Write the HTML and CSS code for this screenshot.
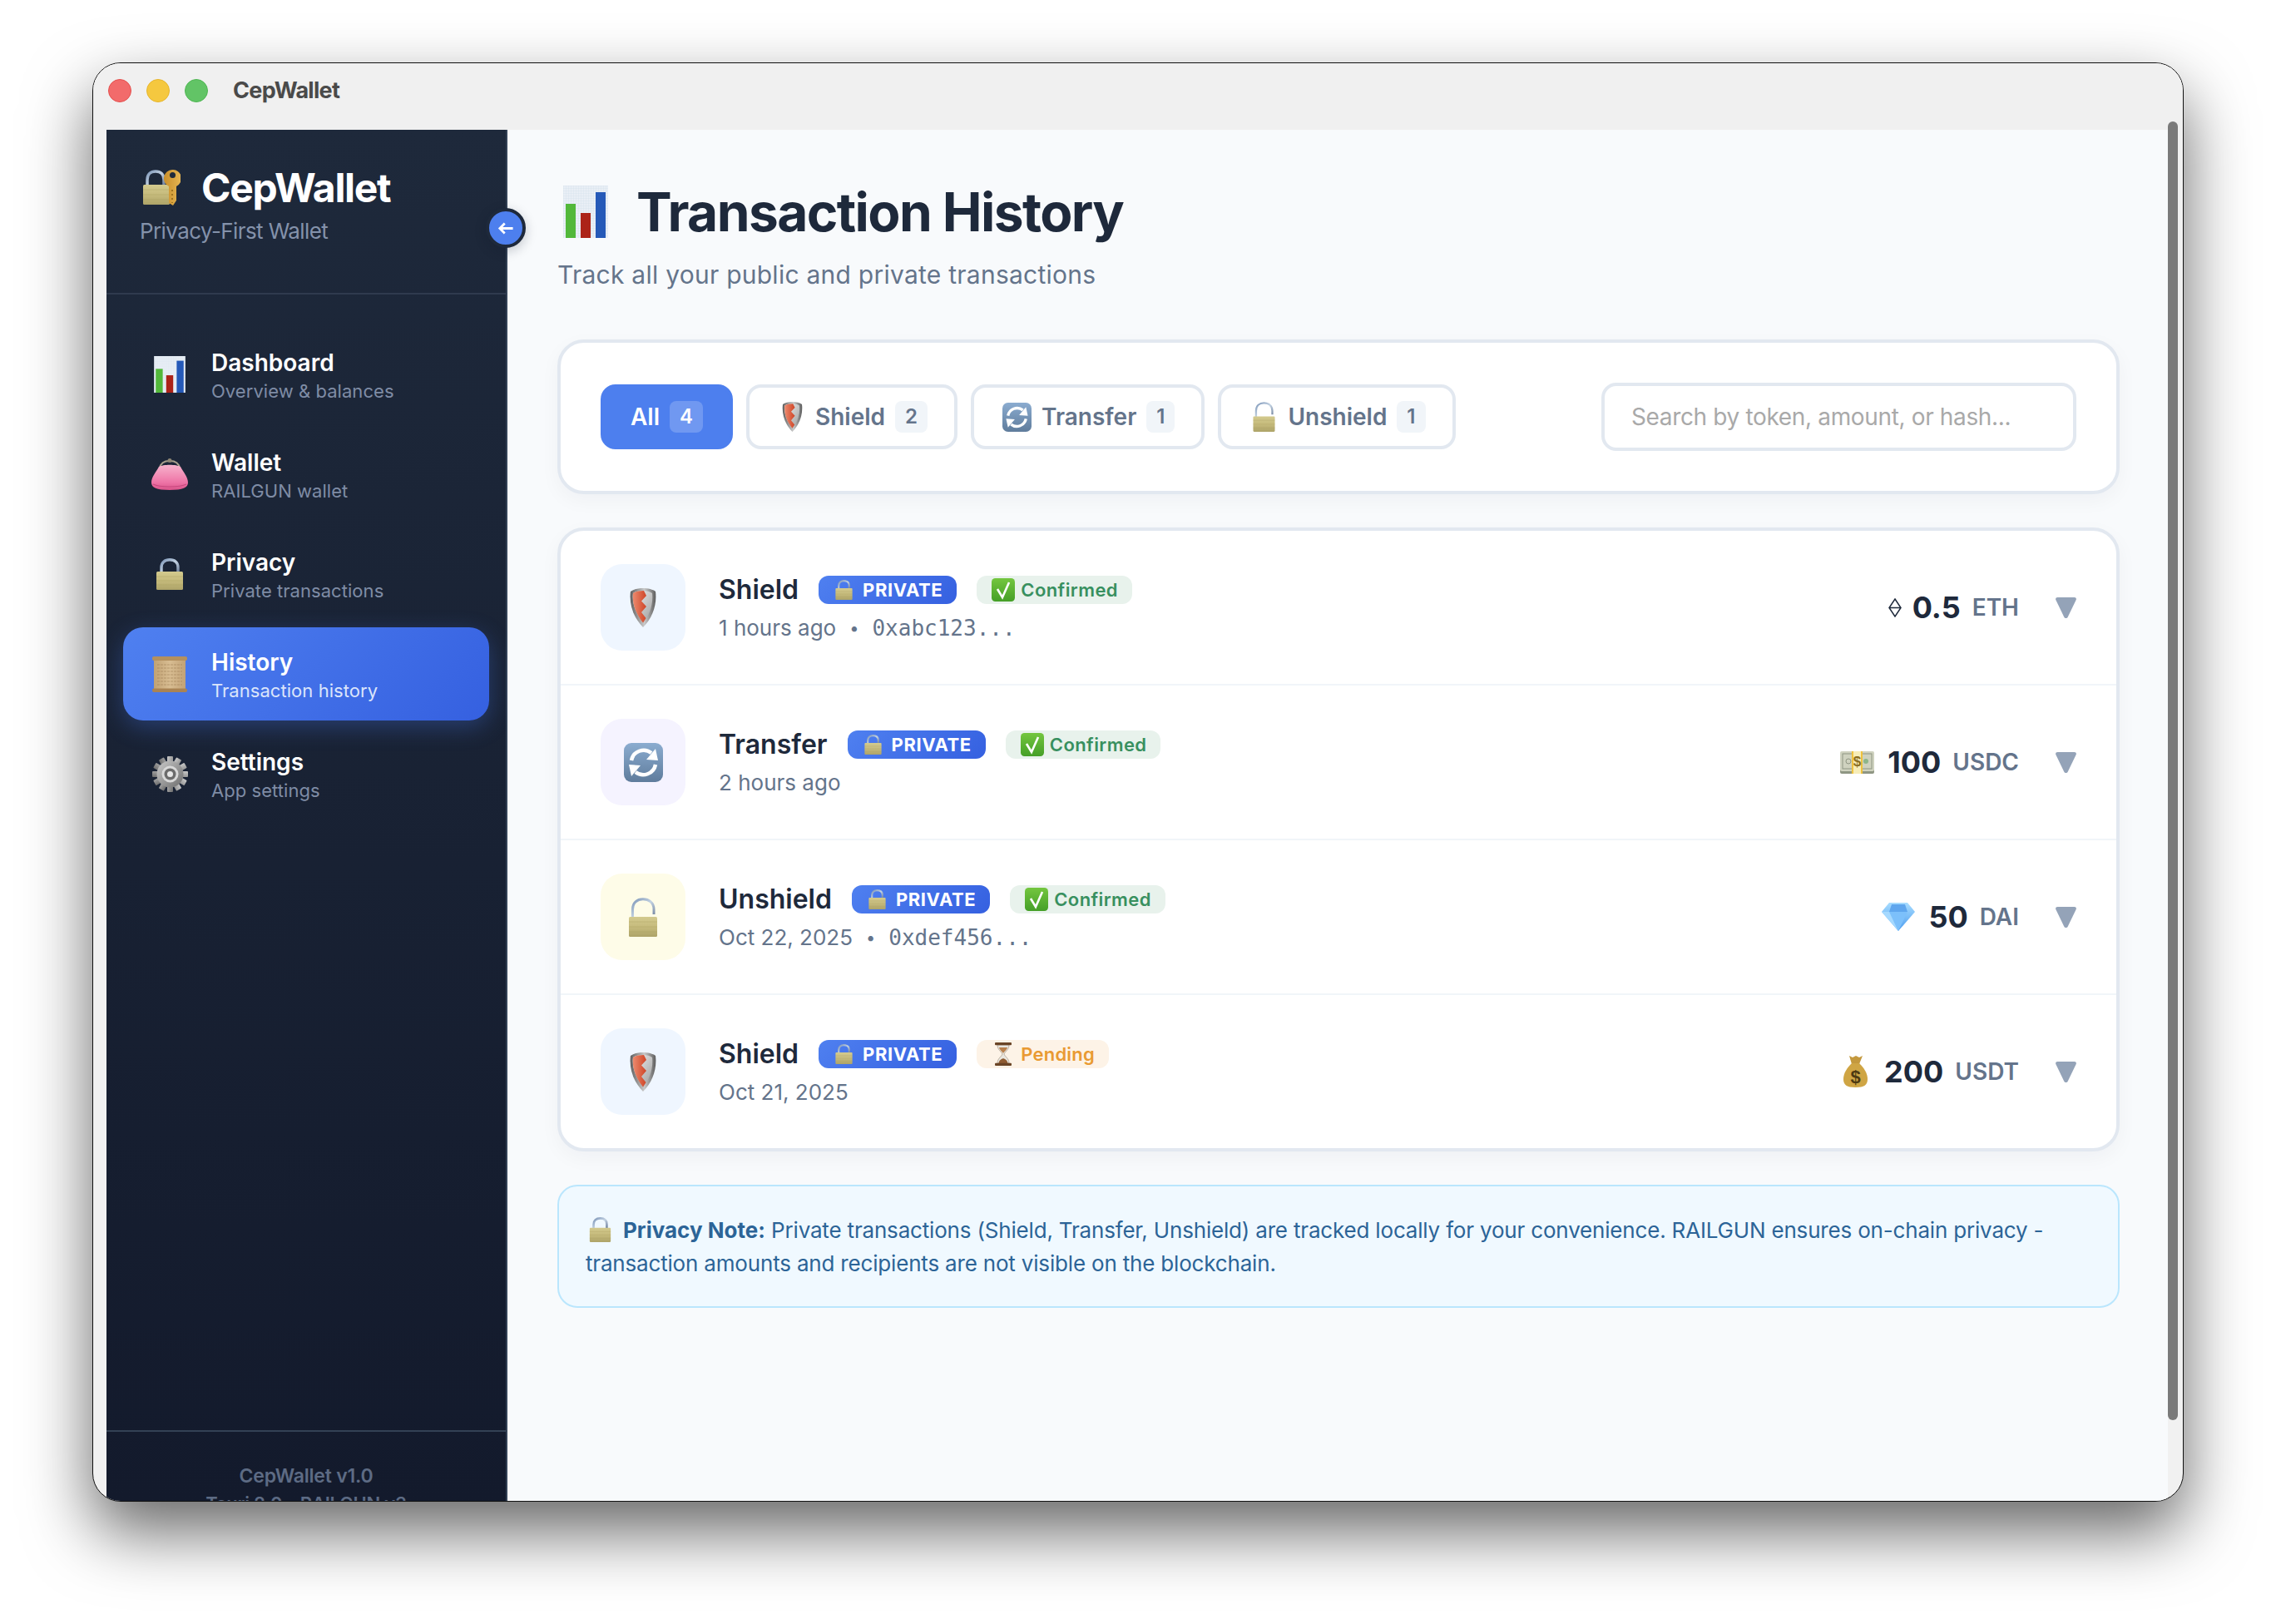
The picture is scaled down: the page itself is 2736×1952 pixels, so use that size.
FILE: index.html
```html
<!DOCTYPE html>
<html lang="en">
<head>
<meta charset="utf-8">
<title>CepWallet</title>
<link rel="stylesheet" href="styles.css">
</head>
<body>
<svg class="sprite" xmlns="http://www.w3.org/2000/svg" aria-hidden="true">
  <defs>
    <linearGradient id="gBrass" x1="0" y1="0" x2="0" y2="1"><stop offset="0" stop-color="#d3ca8e"/><stop offset=".5" stop-color="#c6bb7c"/><stop offset="1" stop-color="#ada368"/></linearGradient>
    <linearGradient id="gSilver" x1="0" y1="0" x2="1" y2="1"><stop offset="0" stop-color="#7d96b8"/><stop offset=".5" stop-color="#c3d2e2"/><stop offset="1" stop-color="#6e809c"/></linearGradient>
    <linearGradient id="gSwap" x1="0" y1="0" x2="0" y2="1"><stop offset="0" stop-color="#8bacd0"/><stop offset="1" stop-color="#5f7c9c"/></linearGradient>
    <linearGradient id="gCheck" x1="0" y1="0" x2="0" y2="1"><stop offset="0" stop-color="#74c63f"/><stop offset="1" stop-color="#459f27"/></linearGradient>
    <linearGradient id="gPink" x1="0" y1="0" x2="0" y2="1"><stop offset="0" stop-color="#f7b2cc"/><stop offset=".7" stop-color="#ee74a6"/><stop offset="1" stop-color="#d9538a"/></linearGradient>
    <linearGradient id="gPaper" x1="0" y1="0" x2="1" y2="0"><stop offset="0" stop-color="#c0a173"/><stop offset=".5" stop-color="#d8bd92"/><stop offset="1" stop-color="#c2a276"/></linearGradient>
    <linearGradient id="gGear" x1="0" y1="0" x2="1" y2="1"><stop offset="0" stop-color="#c9c9c9"/><stop offset="1" stop-color="#6d6d6d"/></linearGradient>
    <linearGradient id="gShield" x1="0" y1="0" x2="1" y2="0"><stop offset="0" stop-color="#5f5f5f"/><stop offset=".55" stop-color="#c9c9c9"/><stop offset="1" stop-color="#5d5d5d"/></linearGradient>
    <linearGradient id="gShieldR" x1="0" y1="0" x2="1" y2="1"><stop offset="0" stop-color="#f2f2f2"/><stop offset="1" stop-color="#9d9d9d"/></linearGradient>
    <linearGradient id="gRed" x1="0" y1="0" x2="1" y2="0"><stop offset="0" stop-color="#ec8a6e"/><stop offset="1" stop-color="#cf4527"/></linearGradient>
    <linearGradient id="gKey" x1="0" y1="0" x2="1" y2="0"><stop offset="0" stop-color="#c98f2a"/><stop offset="1" stop-color="#e6b654"/></linearGradient>
    <linearGradient id="gGem" x1="0" y1="0" x2="0" y2="1"><stop offset="0" stop-color="#a7dcff"/><stop offset="1" stop-color="#4c9df0"/></linearGradient>
    <pattern id="pGrid" width="3" height="3" patternUnits="userSpaceOnUse"><rect width="3" height="3" fill="#e9eff6"/><path d="M3 0H0V3" fill="none" stroke="#cfdbe8" stroke-width=".6"/></pattern>
  </defs>
  <symbol id="chart" viewBox="0 0 54 63">
    <rect width="54" height="63" fill="url(#pGrid)"/>
    <rect x="3" y="22" width="12" height="41" fill="#52b83a"/>
    <rect x="21" y="33" width="12" height="30" fill="#ac2318"/>
    <rect x="39" y="8" width="12" height="55" fill="#2559b8"/>
  </symbol>
  <symbol id="lockkey" viewBox="0 0 45 43">
    <path d="M5 19V12C5 5.500 9 2 15 2S25 5.500 25 12V19" fill="none" stroke="url(#gSilver)" stroke-width="3.500"/>
    <rect y="18" width="32" height="24" rx="1.500" fill="url(#gBrass)"/>
    <path d="M0 24H32M0 30H32M0 36H32" stroke="#a99e60" stroke-width=".6" opacity=".6"/>
    <path d="M35 0A10.500 10.500 0 0 1 40 20V37L36 43L31 40V20A10.500 10.500 0 0 1 35 0Z" fill="url(#gKey)"/>
    <circle cx="35.500" cy="6.500" r="3.500" fill="#1e293b"/>
    <path d="M35 24V40" stroke="#8e6414" stroke-width="1.500" stroke-dasharray="2 3"/>
  </symbol>
  <symbol id="lock" viewBox="0 0 32 38">
    <path d="M6 18V11C6 5 10 1.800 16 1.800S26 5 26 11V18" fill="none" stroke="url(#gSilver)" stroke-width="3.400"/>
    <rect y="16" width="32" height="22" rx="1.500" fill="url(#gBrass)"/>
    <path d="M0 22H32M0 27H32M0 32H32" stroke="#a99e60" stroke-width=".6" opacity=".6"/>
  </symbol>
  <symbol id="unlock" viewBox="0 0 34 47">
    <path d="M4.500 24V14C4.500 6 10 1.800 17 1.800S30 6 30 14V20" fill="none" stroke="url(#gSilver)" stroke-width="3"/>
    <rect y="23" width="34" height="24" rx="1.500" fill="url(#gBrass)"/>
    <path d="M0 29H34M0 35H34M0 41H34" stroke="#a99e60" stroke-width=".6" opacity=".6"/>
  </symbol>
  <symbol id="shield" viewBox="0 0 32 47">
    <path d="M16 0C22 0 28 1.500 31 4C33 20 27 36 16 47C5 36-1 20 1 4C4 1.500 10 0 16 0Z" fill="url(#gShield)"/>
    <path d="M16 3C20 3 24.500 4 27 6C28.500 19 24 32 16 41.500C8 32 2.500 19 4 6C6.500 4 12 3 16 3Z" fill="url(#gShieldR)"/>
    <path d="M17 3C12 3 6.500 4 4 6C2.500 19 8 32 16 41.500L19.500 36L14 29L20 22L14 15.500L20 9Z" fill="url(#gRed)"/>
  </symbol>
  <symbol id="swap" viewBox="0 0 47 47">
    <rect width="47" height="47" rx="9" fill="url(#gSwap)"/>
    <path d="M9 21A15 15 0 0 1 33 12" fill="none" stroke="#fff" stroke-width="4.500"/>
    <path d="M27 20L41 21L38 7Z" fill="#fff"/>
    <path d="M38 26A15 15 0 0 1 14 35" fill="none" stroke="#fff" stroke-width="4.500"/>
    <path d="M20 27L6 26L9 40Z" fill="#fff"/>
  </symbol>
  <symbol id="check" viewBox="0 0 28 28">
    <rect width="28" height="28" rx="4.500" fill="url(#gCheck)"/>
    <path d="M7 13L13 23L21 5" fill="none" stroke="#fff" stroke-width="2.600"/>
  </symbol>
  <symbol id="hourglass" viewBox="0 0 20 28">
    <path d="M3 3H17C17 9 12 11 11 14C12 17 17 19 17 25H3C3 19 8 17 9 14C8 11 3 9 3 3Z" fill="#e9e6df" stroke="#9a8a76" stroke-width=".6"/>
    <path d="M5 6H15C14.500 9 11 11 10 13C9 11 5.500 9 5 6Z" fill="#b9814d"/>
    <path d="M4.500 25C5 21 8 20 10 19C12 20 15 21 15.500 25Z" fill="#8f5b31"/>
    <rect width="20" height="3.200" rx="1" fill="#6b4526"/>
    <rect y="24.800" width="20" height="3.200" rx="1" fill="#6b4526"/>
  </symbol>
  <symbol id="gem" viewBox="0 0 40 34">
    <path d="M9 0H31L40 11L20 34L0 11Z" fill="url(#gGem)"/>
    <path d="M12 2H28L31 11H9Z" fill="#5fa6ee"/>
    <path d="M9 11H31L20 34Z" fill="#7cc0fb"/>
    <path d="M0 11L9 11L20 34Z" fill="#a5d9ff"/>
  </symbol>
  <symbol id="purse" viewBox="0 0 44 38">
    <path d="M10 12C11 5 16 3 22 3S33 5 34 12" fill="none" stroke="#a79f8c" stroke-width="2"/>
    <circle cx="22" cy="2.500" r="2.500" fill="#8f8775"/>
    <path d="M9 10C14 7 30 7 35 10C38 16 44 22 44 29C44 35 38 38 22 38S0 35 0 29C0 22 6 16 9 10Z" fill="url(#gPink)"/>
    <path d="M2 31C10 35 34 35 42 31" fill="none" stroke="#c9487f" stroke-width="1.200"/>
  </symbol>
  <symbol id="gear" viewBox="0 0 43 43">
    <g fill="url(#gGear)">
      <rect x="18" width="7" height="43" rx="1"/>
      <rect x="18" width="7" height="43" rx="1" transform="rotate(30 21.500 21.500)"/>
      <rect x="18" width="7" height="43" rx="1" transform="rotate(60 21.500 21.500)"/>
      <rect x="18" width="7" height="43" rx="1" transform="rotate(90 21.500 21.500)"/>
      <rect x="18" width="7" height="43" rx="1" transform="rotate(120 21.500 21.500)"/>
      <rect x="18" width="7" height="43" rx="1" transform="rotate(150 21.500 21.500)"/>
    </g>
    <circle cx="21.500" cy="21.500" r="16" fill="url(#gGear)"/>
    <circle cx="21.500" cy="21.500" r="10" fill="#d9d9d9"/>
    <circle cx="21.500" cy="21.500" r="7" fill="#6c6c6c"/>
    <circle cx="21.500" cy="21.500" r="3.500" fill="#e7e7e7"/>
  </symbol>
  <symbol id="scroll" viewBox="0 0 42 43">
    <rect x="2" y="3" width="38" height="37" fill="url(#gPaper)"/>
    <path d="M6 10H36M6 14H36M6 18H36M6 22H36M6 26H36M6 30H36M6 34H36" stroke="#8c6a42" stroke-width=".7" stroke-dasharray="3 1" opacity=".6"/>
    <rect width="42" height="5" rx="2" fill="#b3905f"/>
    <rect y="38.500" width="42" height="4.500" rx="2" fill="#a98354"/>
  </symbol>
  <symbol id="eth" viewBox="0 0 16 23">
    <path d="M8 1L15 11.500L8 22L1 11.500ZM1 11.500H15" fill="none" stroke="#1e293b" stroke-width="1.500"/>
  </symbol>
  <symbol id="tri" viewBox="0 0 25 25">
    <path d="M2.500 0H22.500C24.500 0 25.300 1.500 24.700 3L14.800 23.500C13.800 25.500 11.200 25.500 10.200 23.500L.3 3C-.3 1.500.5 0 2.500 0Z" fill="#94a3b8"/>
  </symbol>
</svg>

<div class="window">
  <header class="titlebar">
    <span class="light light-red"></span>
    <span class="light light-yellow"></span>
    <span class="light light-green"></span>
    <span class="window-title">CepWallet</span>
  </header>
  <div class="window-body">
    <aside class="sidebar">
      <div class="brand">
        <div class="brand-row">
          <svg class="i-lockkey"><use href="#lockkey"/></svg>
          <span class="brand-name">CepWallet</span>
        </div>
        <div class="brand-sub">Privacy-First Wallet</div>
      </div>
      <nav class="nav">
        <a class="nav-item"><span class="nav-icon"><svg class="i-nav-chart"><use href="#chart"/></svg></span><span class="nav-text"><b>Dashboard</b><small>Overview &amp; balances</small></span></a>
        <a class="nav-item"><span class="nav-icon"><svg class="i-nav-purse"><use href="#purse"/></svg></span><span class="nav-text"><b>Wallet</b><small>RAILGUN wallet</small></span></a>
        <a class="nav-item"><span class="nav-icon"><svg class="i-nav-lock"><use href="#lock"/></svg></span><span class="nav-text"><b>Privacy</b><small>Private transactions</small></span></a>
        <a class="nav-item active"><span class="nav-icon"><svg class="i-nav-scroll"><use href="#scroll"/></svg></span><span class="nav-text"><b>History</b><small>Transaction history</small></span></a>
        <a class="nav-item"><span class="nav-icon"><svg class="i-nav-gear"><use href="#gear"/></svg></span><span class="nav-text"><b>Settings</b><small>App settings</small></span></a>
      </nav>
      <footer class="side-foot">
        <div class="foot-name">CepWallet v1.0</div>
        <div class="foot-stack">Tauri 2.0 • RAILGUN v3</div>
      </footer>
    </aside>
    <button class="collapse" aria-label="Collapse sidebar">
      <svg viewBox="0 0 18 14" class="i-back"><path d="M17 7H2.500M7.800 1.500L2.300 7L7.800 12.500" fill="none" stroke="#fff" stroke-width="2.600"/></svg>
    </button>

    <main class="main">
      <h1 class="page-title"><svg class="i-title"><use href="#chart"/></svg>Transaction History</h1>
      <p class="page-sub">Track all your public and private transactions</p>

      <section class="card filters">
        <div class="tabs">
          <button class="tab tab-on">All <span class="count">4</span></button>
          <button class="tab"><svg class="i-tab-shield"><use href="#shield"/></svg>Shield <span class="count">2</span></button>
          <button class="tab"><svg class="i-tab-swap"><use href="#swap"/></svg>Transfer <span class="count">1</span></button>
          <button class="tab"><svg class="i-tab-unlock"><use href="#unlock"/></svg>Unshield <span class="count">1</span></button>
        </div>
        <input class="search" type="text" placeholder="Search by token, amount, or hash...">
      </section>

      <section class="card list">
        <article class="tx">
          <span class="tx-icon tint-blue"><svg class="i-row-shield"><use href="#shield"/></svg></span>
          <div class="tx-info">
            <div class="tx-head"><span class="tx-name">Shield</span><span class="pill pill-private"><svg class="i-pill-lock"><use href="#lock"/></svg>PRIVATE</span><span class="pill pill-ok"><svg class="i-pill-check"><use href="#check"/></svg>Confirmed</span></div>
            <div class="tx-meta"><span>1 hours ago</span><span class="dot">•</span><span class="hash">0xabc123...</span></div>
          </div>
          <div class="amount"><svg class="i-eth"><use href="#eth"/></svg><span class="num">0.5</span><span class="unit">ETH</span></div>
          <svg class="i-tri"><use href="#tri"/></svg>
        </article>
        <article class="tx">
          <span class="tx-icon tint-purple"><svg class="i-row-swap"><use href="#swap"/></svg></span>
          <div class="tx-info">
            <div class="tx-head"><span class="tx-name">Transfer</span><span class="pill pill-private"><svg class="i-pill-lock"><use href="#lock"/></svg>PRIVATE</span><span class="pill pill-ok"><svg class="i-pill-check"><use href="#check"/></svg>Confirmed</span></div>
            <div class="tx-meta"><span>2 hours ago</span></div>
          </div>
          <div class="amount">
            <svg class="i-money" viewBox="0 0 41 27">
              <rect y="2" width="41" height="25" rx="2" fill="#8f9683"/>
              <rect width="41" height="24" rx="2" fill="#cfd2bf"/>
              <rect x="3" y="3" width="35" height="18" fill="none" stroke="#8f9683"/>
              <circle cx="10" cy="12" r="3" fill="none" stroke="#8f9683"/>
              <circle cx="31" cy="12" r="3" fill="#8db58a"/>
              <rect x="14" width="13" height="27" fill="#f7edb7"/>
              <rect x="14" width="2" height="27" fill="#efc23f"/>
              <rect x="25" width="2" height="27" fill="#efc23f"/>
              <text x="20.500" y="18" text-anchor="middle" class="svg-dollar">$</text>
            </svg>
            <span class="num">100</span><span class="unit">USDC</span></div>
          <svg class="i-tri"><use href="#tri"/></svg>
        </article>
        <article class="tx">
          <span class="tx-icon tint-yellow"><svg class="i-row-unlock"><use href="#unlock"/></svg></span>
          <div class="tx-info">
            <div class="tx-head"><span class="tx-name">Unshield</span><span class="pill pill-private"><svg class="i-pill-lock"><use href="#lock"/></svg>PRIVATE</span><span class="pill pill-ok"><svg class="i-pill-check"><use href="#check"/></svg>Confirmed</span></div>
            <div class="tx-meta"><span>Oct 22, 2025</span><span class="dot">•</span><span class="hash">0xdef456...</span></div>
          </div>
          <div class="amount"><svg class="i-gem"><use href="#gem"/></svg><span class="num">50</span><span class="unit">DAI</span></div>
          <svg class="i-tri"><use href="#tri"/></svg>
        </article>
        <article class="tx">
          <span class="tx-icon tint-blue"><svg class="i-row-shield"><use href="#shield"/></svg></span>
          <div class="tx-info">
            <div class="tx-head"><span class="tx-name">Shield</span><span class="pill pill-private"><svg class="i-pill-lock"><use href="#lock"/></svg>PRIVATE</span><span class="pill pill-wait"><svg class="i-pill-glass"><use href="#hourglass"/></svg>Pending</span></div>
            <div class="tx-meta"><span>Oct 21, 2025</span></div>
          </div>
          <div class="amount">
            <svg class="i-bag" viewBox="0 0 29 38">
              <path d="M7 0L11 2L15 0L19 2L23 0L19 10H10Z" fill="#c4993e"/>
              <path d="M10 9H19C25 15 29 21 29 28C29 35 25 38 14.500 38S0 35 0 28C0 21 4 15 10 9Z" fill="#cfa544"/>
              <text x="14.500" y="33" text-anchor="middle" class="svg-bag">$</text>
            </svg>
            <span class="num">200</span><span class="unit">USDT</span></div>
          <svg class="i-tri"><use href="#tri"/></svg>
        </article>
      </section>

      <section class="note">
        <svg class="i-note-lock"><use href="#lock"/></svg><strong>Privacy Note:</strong> Private transactions (Shield, Transfer, Unshield) are tracked locally for your convenience. RAILGUN ensures on-chain privacy - transaction amounts and recipients are not visible on the blockchain.
      </section>
    </main>
    <span class="scrollbar"></span>
  </div>
</div>
</body>
</html>
```
FILE: styles.css
```css
* { box-sizing: border-box; }
html, body { margin: 0; height: 100%; }
body {
  background: #fff;
  font-family: Inter, "Noto Sans", sans-serif;
  padding: 75px 111px 147px 111px;
  overflow: hidden;
}
.sprite { display: block; width: 0; height: 0; }
.svg-dollar { font: 700 17px "Liberation Sans", sans-serif; fill: #8a6d1f; }
.svg-bag { font: 700 22px "Liberation Sans", sans-serif; fill: #4d3a12; }

.window {
  width: 2514px;
  height: 1730px;
  background: #f1f1f1;
  border: 1px solid #111;
  border-radius: 34px;
  overflow: hidden;
  display: flex;
  flex-direction: column;
  box-shadow: 0 36px 80px rgba(0, 0, 0, .6);
}
.titlebar {
  height: 80px;
  flex: none;
  display: flex;
  align-items: center;
  padding: 0 0 14px 18px;
  gap: 18px;
  background: #f0f0f0;
}
.light { width: 28px; height: 28px; border-radius: 50%; border: 1px solid; }
.light-red { background: #f26b6b; border-color: #e4504e; }
.light-yellow { background: #f5c83f; border-color: #e6b52c; }
.light-green { background: #62c466; border-color: #4fb653; }
.window-title { margin: 0 0 2px 12px; font-size: 27px; font-weight: 700; letter-spacing: -.7px; color: #4a4a4a; }

.window-body { flex: 1; min-height: 0; display: flex; padding-left: 16px; position: relative; }

/* sidebar */
.sidebar {
  width: 482px;
  flex: none;
  display: flex;
  flex-direction: column;
  background: linear-gradient(180deg, #1e293b 0%, #131a2c 100%);
  border-right: 2px solid #334155;
}
.brand { height: 198px; flex: none; padding: 44px 40px 0; border-bottom: 2px solid #2f3a4e; }
.brand-row { display: flex; align-items: center; height: 50px; }
.i-lockkey { width: 45px; height: 43px; margin-left: 4px; margin-right: 25px; }
.brand-name { font-size: 48px; font-weight: 700; color: #fff; letter-spacing: -1.3px; }
.brand-sub { margin-top: 12px; font-size: 26px; letter-spacing: -.6px; color: #8492ab; }

.nav { flex: 1; padding: 40px 20px 0; display: flex; flex-direction: column; gap: 8px; }
.nav-item { height: 112px; display: flex; align-items: center; padding-left: 32px; gap: 26px; border-radius: 24px; }
.nav-item.active {
  background: linear-gradient(135deg, #4f80f0 0%, #3560e0 100%);
  box-shadow: 0 8px 28px rgba(70, 120, 240, .32);
}
.nav-icon { width: 48px; display: flex; justify-content: center; flex: none; }
.i-nav-chart { width: 38px; height: 44px; }
.i-nav-purse { width: 44px; height: 38px; }
.i-nav-lock { width: 32px; height: 38px; }
.i-nav-scroll { width: 42px; height: 43px; }
.i-nav-gear { width: 43px; height: 43px; }
.nav-text { display: flex; flex-direction: column; gap: 3px; padding-top: 3px; }
.nav-text b { font-size: 28px; line-height: 34px; font-weight: 600; color: #fff; }
.nav-text small { font-size: 22px; line-height: 28px; letter-spacing: .05px; color: #7f8ca5; }
.active .nav-text small { color: #dbe5fb; }

.side-foot { height: 85px; flex: none; border-top: 2px solid #334155; padding-top: 39px; text-align: center; color: #5d6b84; font-size: 23px; font-weight: 600; letter-spacing: -.2px; }
.foot-name { line-height: 29px; }
.foot-stack { line-height: 29px; margin-top: 4px; font-size: 22px; }

.collapse {
  position: absolute;
  left: 472px;
  top: 94px;
  width: 48px;
  height: 48px;
  padding: 0;
  border-radius: 50%;
  border: 4px solid #1e293b;
  background: #4d7fee;
  display: flex;
  align-items: center;
  justify-content: center;
  box-shadow: 0 4px 14px rgba(15, 23, 42, .22);
}
.i-back { width: 20px; height: 15px; }

/* main */
.main { width: 1996px; flex: none; background: #f8fafc; padding: 60px 58px 0 60px; }
.page-title { margin: 0; display: flex; align-items: center; height: 77px; font-size: 64px; font-weight: 700; color: #1e293b; letter-spacing: -1.6px; }
.i-title { width: 54px; height: 63px; margin: 0 34px 0 7px; }
.page-sub { margin: 18px 0 0; font-size: 30px; letter-spacing: .25px; line-height: 39px; color: #64748b; }

.card { background: #fff; border: 4px solid #e2e8f0; border-radius: 32px; box-shadow: 0 8px 24px rgba(15, 23, 42, .04); }
.filters { margin-top: 58px; padding: 48px; display: flex; align-items: center; justify-content: space-between; }
.tabs { display: flex; gap: 16px; }
.tab {
  height: 78px;
  padding: 0 32px;
  display: flex;
  align-items: center;
  gap: 12px;
  background: #fff;
  border: 4px solid #e2e8f0;
  border-radius: 18px;
  font: 600 28px Inter, sans-serif;
  color: #64748b;
}
.tab-on { background: #4d7fee; border-color: #4d7fee; color: #fff; }
.count { height: 38px; padding: 0 12px; border-radius: 8px; background: #f1f5f9; font-size: 24px; line-height: 38px; }
.tab-on .count { background: rgba(255, 255, 255, .2); }
.i-tab-shield { width: 25px; height: 36px; margin: 0 3px 0 7px; }
.i-tab-swap { width: 35px; height: 35px; margin-left: 2px; }
.i-tab-unlock { width: 27px; height: 36px; margin: 0 3px 0 6px; }
.search { width: 571px; height: 82px; padding: 0 32px; background: #fff; border: 4px solid #e2e8f0; border-radius: 18px; font: 400 28px Inter, sans-serif; letter-spacing: -.35px; outline: none; }
.search::placeholder { color: #a9a9a9; opacity: 1; }

.list { margin-top: 40px; }
.tx { height: 186px; padding: 0 48px; display: flex; align-items: center; gap: 40px; border-bottom: 2px solid #f1f5f9; }
.tx:last-child { height: 184px; border-bottom: 0; }
.tx-icon { width: 102px; height: 104px; flex: none; border-radius: 26px; display: flex; align-items: center; justify-content: center; }
.tint-blue { background: #eff6ff; }
.tint-purple { background: #f5f3ff; }
.tint-yellow { background: #fefce8; }
.i-row-shield { width: 32px; height: 47px; }
.i-row-swap { width: 47px; height: 47px; }
.i-row-unlock { width: 34px; height: 47px; }
.tx-info { flex: 1; min-width: 0; }
.tx-head { display: flex; align-items: center; gap: 24px; height: 40px; }
.tx-name { font-size: 32px; font-weight: 600; color: #1e293b; }
.pill { height: 34px; display: flex; align-items: center; gap: 12px; border-radius: 12px; font-size: 22px; font-weight: 600; }
.pill-private { padding: 0 17px 0 20px; background: linear-gradient(135deg, #4f80f0, #3560e0); color: #fff; font-weight: 700; letter-spacing: .6px; }
.pill-ok { padding: 0 17px 0 18px; gap: 7px; background: #e8f2ec; color: #38905f; letter-spacing: .4px; }
.pill-wait { padding: 0 17px 0 22px; gap: 11px; background: #fdf3e7; color: #e99a32; letter-spacing: .2px; }
.i-pill-lock { width: 21px; height: 24px; }
.i-pill-check { width: 28px; height: 28px; }
.i-pill-glass { width: 20px; height: 28px; }
.tx-meta { margin-top: 9px; display: flex; align-items: center; gap: 16px; font-size: 26px; line-height: 34px; color: #64748b; }
.dot { font-size: 20px; }
.hash { font-family: "DejaVu Sans Mono", monospace; }

.amount { display: flex; align-items: center; gap: 14px; color: #1e293b; }
.num { font-size: 36px; font-weight: 700; }
.unit { font-size: 28px; font-weight: 600; color: #64748b; }
.i-eth { width: 16px; height: 23px; margin-right: -1px; }
.i-money { width: 41px; height: 27px; margin-right: 2px; }
.i-gem { width: 40px; height: 34px; margin-right: 2px; }
.i-bag { width: 29px; height: 38px; margin-right: 6px; }
.i-tri { width: 25px; height: 25px; flex: none; margin-left: 4px; }

.note { margin-top: 40px; padding: 33px 32px 31px; background: #f0f9ff; border: 2px solid #bae6fd; border-radius: 24px; font-size: 26px; line-height: 40px; letter-spacing: -.18px; color: #2c6497; }
.note strong { font-weight: 700; letter-spacing: 0; }
.i-note-lock { width: 27px; height: 30px; margin: 0 14px -5px 4px; }

.scrollbar { position: absolute; left: 2494px; top: -10px; width: 12px; height: 1561px; border-radius: 6px; background: #7a7a7a; }
```
